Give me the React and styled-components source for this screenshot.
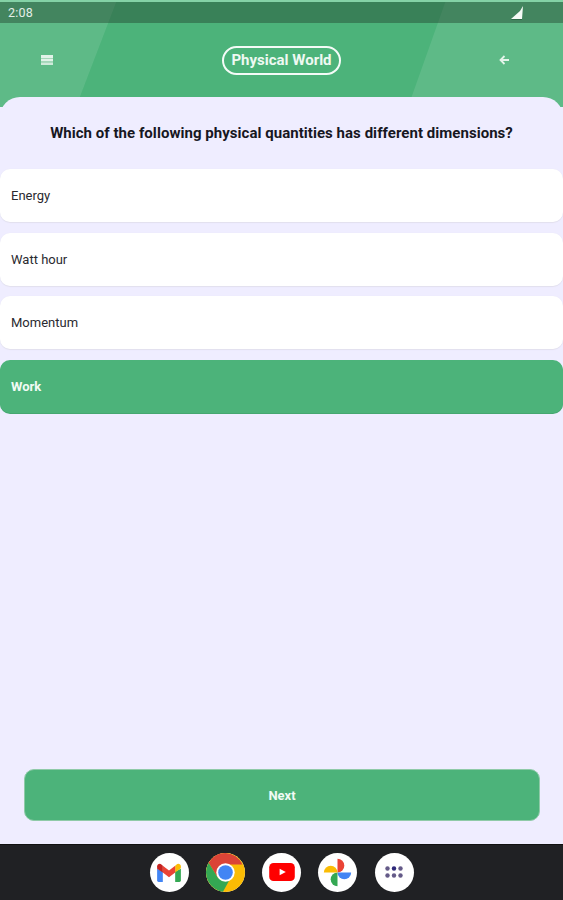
import React from "react";
import styled, { createGlobalStyle } from "styled-components";

const Global = createGlobalStyle`
  html, body { margin: 0; padding: 0; background: #202124; }
  * { box-sizing: border-box; }
  body { font-family: Roboto, "Liberation Sans", sans-serif; }
`;

const Screen = styled.div`
  width: 563px;
  height: 900px;
  display: flex;
  flex-direction: column;
  overflow: hidden;
  background: #efedff;
`;

const Top = styled.div`
  position: relative;
  height: 107px;
  margin-bottom: -10px;
  padding-top: 2px;
  background: #4cb37a;
  flex: none;
`;

const Shapes = styled.svg`
  position: absolute;
  inset: 0;
  width: 100%;
  height: 100%;
`;

const StatusBar = styled.div`
  position: relative;
  height: 21px;
  padding: 0 40px 0 8px;
  display: flex;
  align-items: center;
  justify-content: space-between;
  background: rgba(32, 60, 40, 0.42);
  color: #e4efe8;
  font-size: 12.5px;
  letter-spacing: 0.2px;
`;

const Header = styled.div`
  position: relative;
  height: 74px;
  padding: 0 54px 0 41px;
  display: flex;
  align-items: center;
  justify-content: space-between;
  color: #eaf7ef;
`;

const TitlePill = styled.div`
  height: 29px;
  width: 119px;
  display: flex;
  align-items: center;
  justify-content: center;
  white-space: nowrap;
  border: 2px solid #f4fbf7;
  border-radius: 15px;
  font-size: 15px;
  font-weight: 700;
  color: #eef9f2;
  margin-left: 11px;
`;

const Card = styled.main`
  position: relative;
  flex: 1;
  min-height: 0;
  display: flex;
  flex-direction: column;
  background: #efedff;
  border-radius: 20px 20px 0 0;
`;

const Question = styled.h1`
  margin: 0;
  height: 72px;
  display: flex;
  align-items: center;
  justify-content: center;
  font-size: 15px;
  font-weight: 700;
  color: #17171f;
  letter-spacing: 0.04px;
`;

const Options = styled.div`
  display: flex;
  flex-direction: column;
  gap: 10.5px;
`;

const Option = styled.div`
  height: 53px;
  padding: 0 11px;
  display: flex;
  align-items: center;
  border-radius: 10px;
  font-size: 13px;
  font-weight: ${(p) => (p.$selected ? 700 : 400)};
  color: ${(p) => (p.$selected ? "#f2fbf5" : "#2a2a30")};
  background: ${(p) => (p.$selected ? "#4cb37a" : "#ffffff")};
  box-shadow: ${(p) => (p.$selected ? "0 1px 0 #45a770" : "0 1px 1px #e2e0ee, 0 0 1px #e6e4f4")};
`;

const NextButton = styled.button`
  margin: auto 23px 23px 24px;
  height: 52px;
  border: 1px solid #8fcaa8;
  border-radius: 10px;
  background: #4cb37a;
  color: #f0faf4;
  font-family: inherit;
  font-size: 13px;
  font-weight: 700;
`;

const Dock = styled.nav`
  height: 56px;
  flex: none;
  display: flex;
  align-items: center;
  justify-content: center;
  gap: 17.25px;
  padding: 0 0 1px 0;
  background: #202124;
  border-top: 1px solid #111;
`;

const DockIcon = styled.div`
  width: 39px;
  height: 39px;
  border-radius: 50%;
  background: #fff;
  display: flex;
  align-items: center;
  justify-content: center;
  flex-wrap: wrap;
`;

const Menu = () => (
  <svg width="12" height="10" viewBox="0 0 12 10">
    <rect width="12" height="3" fill="#e2f3e9" />
    <rect y="3" width="12" height="1" fill="#a5d8ba" />
    <rect y="4" width="12" height="2.500" fill="#e2f3e9" />
    <rect y="6.500" width="12" height="1" fill="#a5d8ba" />
    <rect y="7.500" width="12" height="2.500" fill="#cfeada" />
  </svg>
);

const Back = () => (
  <svg width="10" height="10" viewBox="0 0 10 10" fill="none" stroke="#e4f4ea" strokeWidth="1.8">
    <path d="M10 5H1.500M5.500 1L1.500 5l4 4" />
  </svg>
);

const Signal = () => (
  <svg width="12" height="14" viewBox="0 0 12 14">
    <path d="M0 13L9 5L12 0L11 13z" fill="#f6faf7" />
    <path d="M0 13h11v1H1z" fill="#2f6a48" />
  </svg>
);

const Gmail = () => (
  <svg width="26" height="19" viewBox="0 0 27 20">
    <path d="M1 6v12.500a1.500 1.500 0 0 0 1.500 1.500H7V9z" fill="#4285f4" />
    <path d="M26 6v12.500a1.500 1.500 0 0 1-1.500 1.500H20V9z" fill="#34a853" />
    <path d="M20 3v7l6-4.500V3.500C26 1 23 0 21.500 1.500z" fill="#fbbc04" />
    <path d="M7 10V3l6.500 5L20 3v7l-6.500 5z" fill="#ea4335" />
    <path d="M1 3.500V6l6 4V3L5.500 1.500C4 0 1 1 1 3.500z" fill="#c5221f" />
  </svg>
);

const Chrome = () => (
  <svg width="39" height="39" viewBox="0 0 39 39">
    <circle cx="19.500" cy="19.500" r="19.500" fill="#fbbc04" />
    <path d="M19.500 0A19.500 19.500 0 0 0 2.600 9.750L12 25 19.500 11.500H36.400A19.500 19.500 0 0 0 19.500 0z" fill="#db4437" />
    <path d="M2.600 9.750A19.500 19.500 0 0 0 17 38.800L24 26 12 25z" fill="#34a853" />
    <circle cx="19.500" cy="19.500" r="9.200" fill="#fff" />
    <circle cx="19.500" cy="19.500" r="7.300" fill="#4285f4" />
  </svg>
);

const YouTube = () => (
  <svg width="26" height="18" viewBox="0 0 27 19">
    <rect width="27" height="19" rx="4.500" fill="#f00" />
    <path d="M11 6l6.500 3.500L11 13z" fill="#fff" />
  </svg>
);

const Photos = () => (
  <svg width="29" height="29" viewBox="0 0 34 34">
    <path d="M17 17V1a8 8 0 0 1 0 16z" fill="#ea4335" />
    <path d="M17 17h16a8 8 0 0 1-16 0z" fill="#4285f4" />
    <path d="M17 17v16a8 8 0 0 1 0-16z" fill="#34a853" />
    <path d="M17 17H1a8 8 0 0 1 16 0z" fill="#fbbc04" />
  </svg>
);

const Apps = () => (
  <svg width="18" height="12" viewBox="0 0 18 12">
    {[2.500, 9, 15.500].flatMap((x) =>
      [2.500, 9.500].map((y) => (
        <circle key={`${x}-${y}`} cx={x} cy={y} r="2.200" fill={x === 9 && y < 5 ? "#2f2a7a" : "#645a88"} />
      ))
    )}
  </svg>
);

const options = ["Energy", "Watt hour", "Momentum", "Work"];

export default function App() {
  return (
    <Screen>
      <Global />
      <Top>
        <Shapes viewBox="0 0 563 107" preserveAspectRatio="none">
          <path d="M0 0H117L76 107H0z" fill="#fff" fillOpacity="0.1" />
          <path d="M446 0H563V107H408z" fill="#fff" fillOpacity="0.1" />
          <rect width="563" height="2" fill="#84d2a6" />
        </Shapes>
        <StatusBar>
          <span>2:08</span>
          <Signal />
        </StatusBar>
        <Header>
          <Menu />
          <TitlePill>Physical World</TitlePill>
          <Back />
        </Header>
      </Top>
      <Card>
        <Question>Which of the following physical quantities has different dimensions?</Question>
        <Options>
          {options.map((o) => (
            <Option key={o} $selected={o === "Work"}>{o}</Option>
          ))}
        </Options>
        <NextButton>Next</NextButton>
      </Card>
      <Dock>
        <DockIcon><Gmail /></DockIcon>
        <DockIcon><Chrome /></DockIcon>
        <DockIcon><YouTube /></DockIcon>
        <DockIcon><Photos /></DockIcon>
        <DockIcon><Apps /></DockIcon>
      </Dock>
    </Screen>
  );
}
